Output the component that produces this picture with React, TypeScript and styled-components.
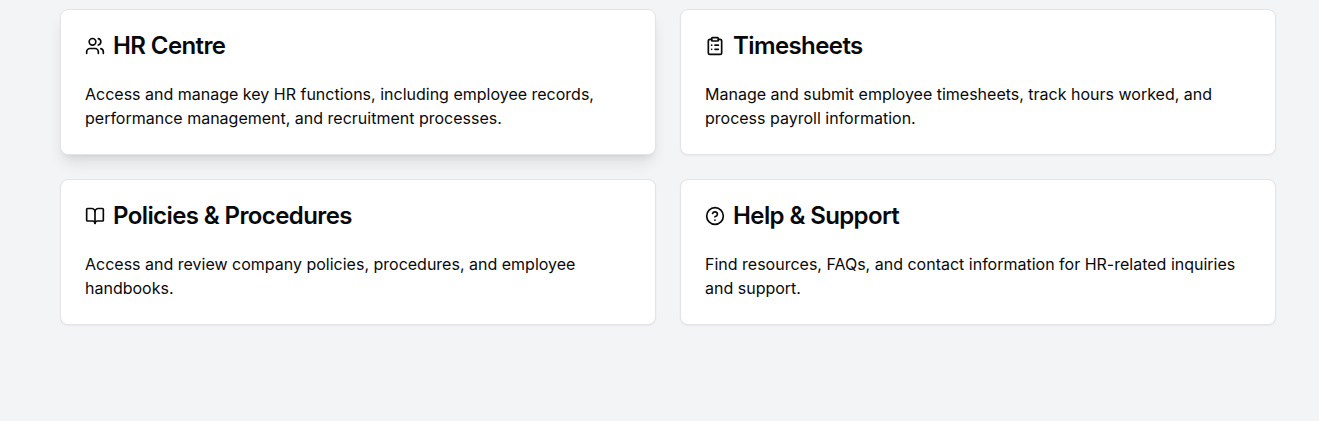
import React from "react";
import styled, { createGlobalStyle } from "styled-components";
import { BookOpen, CircleHelp, ClipboardList, Users, type LucideIcon } from "lucide-react";

const GlobalStyle = createGlobalStyle`
  *, *::before, *::after { box-sizing: border-box; }
  body {
    margin: 0;
    background: #f3f4f6;
    color: #09090b;
    font-family: Inter, "Liberation Sans", sans-serif;
    font-size: 16px;
    line-height: 24px;
  }
`;

const Page = styled.main`
  min-height: 100vh;
  padding: 9px 43px 96px 60px;
`;

const CardGrid = styled.div`
  display: grid;
  grid-template-columns: repeat(2, minmax(0, 1fr));
  gap: 24px;
`;

const Card = styled.section<{ $raised?: boolean }>`
  background: #ffffff;
  border: 1px solid #e4e4e7;
  border-radius: 8px;
  box-shadow: ${({ $raised }) =>
    $raised
      ? "0 10px 15px -3px rgba(0, 0, 0, 0.1), 0 4px 6px -4px rgba(0, 0, 0, 0.1)"
      : "0 1px 2px 0 rgba(0, 0, 0, 0.05)"};
`;

const CardHeader = styled.header`
  padding: 24px;
`;

const CardTitle = styled.h3`
  display: flex;
  align-items: center;
  gap: 8px;
  margin: 0;
  font-size: 24px;
  font-weight: 600;
  line-height: 24px;
  letter-spacing: -0.025em;
`;

const CardText = styled.p`
  margin: 0;
  padding: 0 24px 24px;
`;

interface Section {
  title: string;
  text: string;
  icon: LucideIcon;
  raised?: boolean;
}

const sections: Section[] = [
  {
    title: "HR Centre",
    text: "Access and manage key HR functions, including employee records, performance management, and recruitment processes.",
    icon: Users,
    raised: true,
  },
  {
    title: "Timesheets",
    text: "Manage and submit employee timesheets, track hours worked, and process payroll information.",
    icon: ClipboardList,
  },
  {
    title: "Policies & Procedures",
    text: "Access and review company policies, procedures, and employee handbooks.",
    icon: BookOpen,
  },
  {
    title: "Help & Support",
    text: "Find resources, FAQs, and contact information for HR-related inquiries and support.",
    icon: CircleHelp,
  },
];

export default function App() {
  return (
    <>
      <GlobalStyle />
      <Page>
        <CardGrid>
          {sections.map(({ title, text, icon: Icon, raised }) => (
            <Card key={title} $raised={raised}>
              <CardHeader>
                <CardTitle>
                  <Icon size={20} aria-hidden />
                  {title}
                </CardTitle>
              </CardHeader>
              <CardText>{text}</CardText>
            </Card>
          ))}
        </CardGrid>
      </Page>
    </>
  );
}
